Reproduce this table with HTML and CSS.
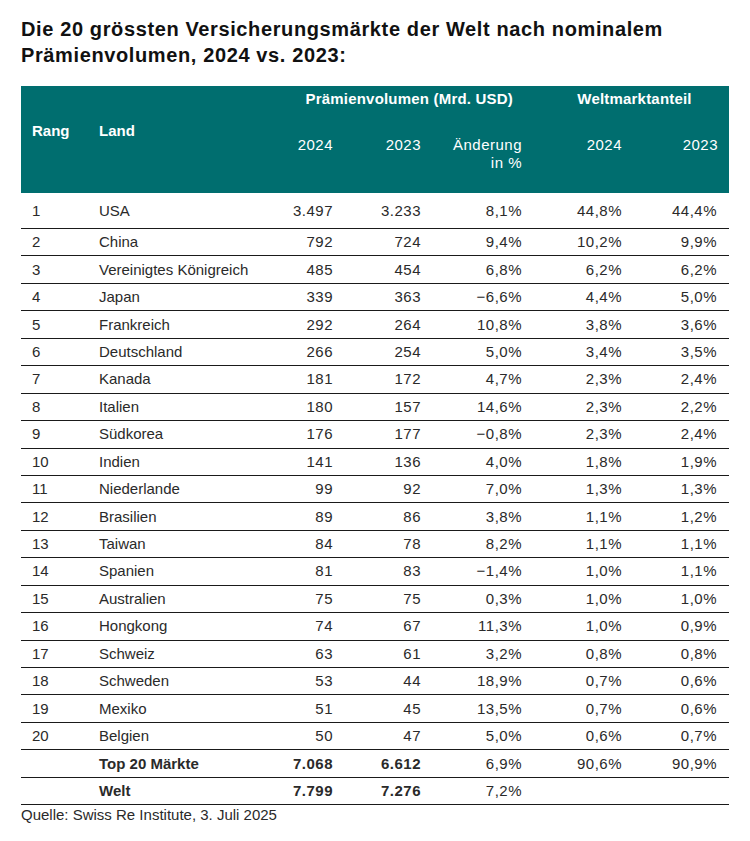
FILE: index.html
```html
<!DOCTYPE html>
<html lang="de">
<head>
<meta charset="utf-8">
<title>Versicherungsmärkte</title>
<link rel="stylesheet" href="styles.css">
</head>
<body>
<div class="page">
  <h1 class="title">Die 20 grössten Versicherungsmärkte der Welt nach nominalem Prämienvolumen, 2024 vs. 2023:</h1>
  <table class="tbl">
    <colgroup>
      <col class="c-rang"><col class="c-land"><col class="c-num"><col class="c-num"><col class="c-chg"><col class="c-share"><col class="c-last">
    </colgroup>
    <thead>
      <tr class="h1row">
        <th class="hl" rowspan="2">Rang</th>
        <th class="hl" rowspan="2">Land</th>
        <th class="grp grp-prem" colspan="3">Prämienvolumen (Mrd. USD)</th>
        <th class="grp grp-share" colspan="2">Weltmarktanteil</th>
      </tr>
      <tr class="h2row">
        <th class="yr">2024</th>
        <th class="yr">2023</th>
        <th class="yr">Änderung<br>in %</th>
        <th class="yr">2024</th>
        <th class="yr">2023</th>
      </tr>
    </thead>
    <tbody>
      <tr class="first"><td>1</td><td>USA</td><td class="n">3.497</td><td class="n">3.233</td><td class="n">8,1%</td><td class="n">44,8%</td><td class="n">44,4%</td></tr>
      <tr><td>2</td><td>China</td><td class="n">792</td><td class="n">724</td><td class="n">9,4%</td><td class="n">10,2%</td><td class="n">9,9%</td></tr>
      <tr><td>3</td><td>Vereinigtes Königreich</td><td class="n">485</td><td class="n">454</td><td class="n">6,8%</td><td class="n">6,2%</td><td class="n">6,2%</td></tr>
      <tr><td>4</td><td>Japan</td><td class="n">339</td><td class="n">363</td><td class="n">−6,6%</td><td class="n">4,4%</td><td class="n">5,0%</td></tr>
      <tr><td>5</td><td>Frankreich</td><td class="n">292</td><td class="n">264</td><td class="n">10,8%</td><td class="n">3,8%</td><td class="n">3,6%</td></tr>
      <tr><td>6</td><td>Deutschland</td><td class="n">266</td><td class="n">254</td><td class="n">5,0%</td><td class="n">3,4%</td><td class="n">3,5%</td></tr>
      <tr><td>7</td><td>Kanada</td><td class="n">181</td><td class="n">172</td><td class="n">4,7%</td><td class="n">2,3%</td><td class="n">2,4%</td></tr>
      <tr><td>8</td><td>Italien</td><td class="n">180</td><td class="n">157</td><td class="n">14,6%</td><td class="n">2,3%</td><td class="n">2,2%</td></tr>
      <tr><td>9</td><td>Südkorea</td><td class="n">176</td><td class="n">177</td><td class="n">−0,8%</td><td class="n">2,3%</td><td class="n">2,4%</td></tr>
      <tr><td>10</td><td>Indien</td><td class="n">141</td><td class="n">136</td><td class="n">4,0%</td><td class="n">1,8%</td><td class="n">1,9%</td></tr>
      <tr><td>11</td><td>Niederlande</td><td class="n">99</td><td class="n">92</td><td class="n">7,0%</td><td class="n">1,3%</td><td class="n">1,3%</td></tr>
      <tr><td>12</td><td>Brasilien</td><td class="n">89</td><td class="n">86</td><td class="n">3,8%</td><td class="n">1,1%</td><td class="n">1,2%</td></tr>
      <tr><td>13</td><td>Taiwan</td><td class="n">84</td><td class="n">78</td><td class="n">8,2%</td><td class="n">1,1%</td><td class="n">1,1%</td></tr>
      <tr><td>14</td><td>Spanien</td><td class="n">81</td><td class="n">83</td><td class="n">−1,4%</td><td class="n">1,0%</td><td class="n">1,1%</td></tr>
      <tr><td>15</td><td>Australien</td><td class="n">75</td><td class="n">75</td><td class="n">0,3%</td><td class="n">1,0%</td><td class="n">1,0%</td></tr>
      <tr><td>16</td><td>Hongkong</td><td class="n">74</td><td class="n">67</td><td class="n">11,3%</td><td class="n">1,0%</td><td class="n">0,9%</td></tr>
      <tr><td>17</td><td>Schweiz</td><td class="n">63</td><td class="n">61</td><td class="n">3,2%</td><td class="n">0,8%</td><td class="n">0,8%</td></tr>
      <tr><td>18</td><td>Schweden</td><td class="n">53</td><td class="n">44</td><td class="n">18,9%</td><td class="n">0,7%</td><td class="n">0,6%</td></tr>
      <tr><td>19</td><td>Mexiko</td><td class="n">51</td><td class="n">45</td><td class="n">13,5%</td><td class="n">0,7%</td><td class="n">0,6%</td></tr>
      <tr><td>20</td><td>Belgien</td><td class="n">50</td><td class="n">47</td><td class="n">5,0%</td><td class="n">0,6%</td><td class="n">0,7%</td></tr>
      <tr class="total"><td></td><td class="b">Top 20 Märkte</td><td class="n b">7.068</td><td class="n b">6.612</td><td class="n">6,9%</td><td class="n">90,6%</td><td class="n">90,9%</td></tr>
      <tr class="total"><td></td><td class="b">Welt</td><td class="n b">7.799</td><td class="n b">7.276</td><td class="n">7,2%</td><td class="n"></td><td class="n"></td></tr>
    </tbody>
  </table>
  <p class="source">Quelle: Swiss Re Institute, 3. Juli 2025</p>
</div>
</body>
</html>
```

FILE: styles.css
```css
html, body {
  margin: 0;
  padding: 0;
  background: #ffffff;
}

.page {
  padding: 16px 21px 0 21px;
  font-family: "Liberation Sans", Arial, sans-serif;
  color: #2a2a2a;
}

.title {
  margin: 0 0 18px 0;
  font-size: 20px;
  line-height: 26px;
  font-weight: bold;
  letter-spacing: 0.62px;
  color: #111111;
  width: 700px;
}

.tbl {
  width: 708px;
  border-collapse: collapse;
  table-layout: fixed;
  font-size: 15px;
}

.c-rang { width: 67px; }
.c-land { width: 168px; }
.c-num { width: 88px; }
.c-chg { width: 101px; }
.c-share { width: 100px; }
.c-last { width: 96px; }

thead th {
  background: #006e6f;
  color: #ffffff;
  padding: 0 11px;
  font-weight: normal;
}

.h1row th {
  height: 24px;
  vertical-align: middle;
}

.h1row .hl {
  font-weight: bold;
  text-align: left;
  vertical-align: top;
  padding-top: 36px;
  line-height: 18px;
}

.grp {
  font-weight: bold;
  white-space: nowrap;
  letter-spacing: 0.2px;
}

.grp-prem {
  text-align: right;
  padding-right: 20px;
}

.grp-share {
  text-align: center;
  padding-left: 18px;
}

.h2row th {
  height: 83px;
  box-sizing: border-box;
  vertical-align: top;
  padding-top: 26px;
  line-height: 18px;
  text-align: right;
  letter-spacing: 0.5px;
}

tbody td {
  height: 26.45px;
  padding: 0 11px;
  border-bottom: 1px solid #1a1a1a;
  vertical-align: middle;
  white-space: nowrap;
  line-height: 18px;
}

tbody tr.first td {
  height: 35px;
}

tbody td:last-child {
  padding-right: 12px;
}

.n {
  text-align: right;
  letter-spacing: 0.5px;
}

.b {
  font-weight: bold;
}

.source {
  margin: 1px 0 0 0;
  font-size: 15px;
  line-height: 18px;
  color: #2a2a2a;
}
```
